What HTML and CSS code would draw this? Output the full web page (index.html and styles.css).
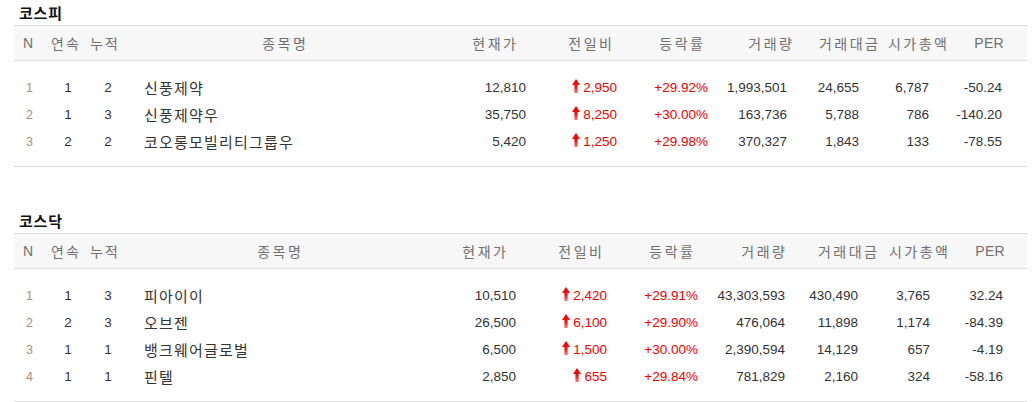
FILE: index.html
```html
<!DOCTYPE html>
<html lang="ko">
<head>
<meta charset="utf-8">
<title>상한가</title>
<link rel="stylesheet" href="styles.css">
</head>
<body>
<svg width="0" height="0" class="defs" aria-hidden="true">
  <defs>
    <linearGradient id="upg" x1="0" y1="0" x2="0" y2="1">
      <stop offset="0" stop-color="#f00000"/>
      <stop offset="0.55" stop-color="#f41010"/>
      <stop offset="1" stop-color="#ff7a7a"/>
    </linearGradient>
    <symbol id="up" viewBox="0 0 8 14">
      <polygon points="4,0 8,6 5.6,6 5.6,14 2.4,14 2.4,6 0,6" fill="url(#upg)"/>
    </symbol>
  </defs>
</svg>

<main class="page">
  <section class="market">
    <h2 class="market-title">코스피</h2>
    <div class="quote kospi">
      <div class="row head">
        <span class="c-n">N</span><span class="c-s">연속</span><span class="c-a">누적</span><span class="c-name">종목명</span><span class="c-price">현재가</span><span class="c-diff">전일비</span><span class="c-rate">등락률</span><span class="c-vol">거래량</span><span class="c-amt">거래대금</span><span class="c-cap">시가총액</span><span class="c-per">PER</span><span></span>
      </div>
      <div class="body">
        <div class="row">
          <span class="c-n">1</span><span class="c-s">1</span><span class="c-a">2</span><span class="c-name">신풍제약</span><span class="c-price">12,810</span><span class="c-diff"><svg class="up"><use href="#up"/></svg>2,950</span><span class="c-rate">+29.92%</span><span class="c-vol">1,993,501</span><span class="c-amt">24,655</span><span class="c-cap">6,787</span><span class="c-per">-50.24</span><span></span>
        </div>
        <div class="row">
          <span class="c-n">2</span><span class="c-s">1</span><span class="c-a">3</span><span class="c-name">신풍제약우</span><span class="c-price">35,750</span><span class="c-diff"><svg class="up"><use href="#up"/></svg>8,250</span><span class="c-rate">+30.00%</span><span class="c-vol">163,736</span><span class="c-amt">5,788</span><span class="c-cap">786</span><span class="c-per">-140.20</span><span></span>
        </div>
        <div class="row">
          <span class="c-n">3</span><span class="c-s">2</span><span class="c-a">2</span><span class="c-name">코오롱모빌리티그룹우</span><span class="c-price">5,420</span><span class="c-diff"><svg class="up"><use href="#up"/></svg>1,250</span><span class="c-rate">+29.98%</span><span class="c-vol">370,327</span><span class="c-amt">1,843</span><span class="c-cap">133</span><span class="c-per">-78.55</span><span></span>
        </div>
      </div>
    </div>
  </section>

  <section class="market">
    <h2 class="market-title">코스닥</h2>
    <div class="quote kosdaq">
      <div class="row head">
        <span class="c-n">N</span><span class="c-s">연속</span><span class="c-a">누적</span><span class="c-name">종목명</span><span class="c-price">현재가</span><span class="c-diff">전일비</span><span class="c-rate">등락률</span><span class="c-vol">거래량</span><span class="c-amt">거래대금</span><span class="c-cap">시가총액</span><span class="c-per">PER</span><span></span>
      </div>
      <div class="body">
        <div class="row">
          <span class="c-n">1</span><span class="c-s">1</span><span class="c-a">3</span><span class="c-name">피아이이</span><span class="c-price">10,510</span><span class="c-diff"><svg class="up"><use href="#up"/></svg>2,420</span><span class="c-rate">+29.91%</span><span class="c-vol">43,303,593</span><span class="c-amt">430,490</span><span class="c-cap">3,765</span><span class="c-per">32.24</span><span></span>
        </div>
        <div class="row">
          <span class="c-n">2</span><span class="c-s">2</span><span class="c-a">3</span><span class="c-name">오브젠</span><span class="c-price">26,500</span><span class="c-diff"><svg class="up"><use href="#up"/></svg>6,100</span><span class="c-rate">+29.90%</span><span class="c-vol">476,064</span><span class="c-amt">11,898</span><span class="c-cap">1,174</span><span class="c-per">-84.39</span><span></span>
        </div>
        <div class="row">
          <span class="c-n">3</span><span class="c-s">1</span><span class="c-a">1</span><span class="c-name">뱅크웨어글로벌</span><span class="c-price">6,500</span><span class="c-diff"><svg class="up"><use href="#up"/></svg>1,500</span><span class="c-rate">+30.00%</span><span class="c-vol">2,390,594</span><span class="c-amt">14,129</span><span class="c-cap">657</span><span class="c-per">-4.19</span><span></span>
        </div>
        <div class="row">
          <span class="c-n">4</span><span class="c-s">1</span><span class="c-a">1</span><span class="c-name">핀텔</span><span class="c-price">2,850</span><span class="c-diff"><svg class="up"><use href="#up"/></svg>655</span><span class="c-rate">+29.84%</span><span class="c-vol">781,829</span><span class="c-amt">2,160</span><span class="c-cap">324</span><span class="c-per">-58.16</span><span></span>
        </div>
      </div>
    </div>
  </section>
</main>
</body>
</html>
```

FILE: styles.css
```css
* { box-sizing: border-box; }

html, body {
  margin: 0;
  background: #fff;
}

body {
  font-family: "Liberation Sans", "Noto Sans CJK KR", Arial, sans-serif;
  color: #333;
}

.defs {
  position: absolute;
  width: 0;
  height: 0;
  overflow: hidden;
}

.page {
  padding: 0 5px 0 14px;
}

.market + .market {
  margin-top: 41px;
}

.market-title {
  margin: 0;
  padding-left: 5px;
  height: 25px;
  line-height: 25px;
  font-family: "Noto Sans CJK KR", sans-serif;
  font-size: 15px;
  font-weight: 700;
  letter-spacing: 0.8px;
  color: #111;
}

.row {
  display: grid;
  align-items: center;
  white-space: nowrap;
}

.kospi .row {
  grid-template-columns: 28px 46px 32px 328px 78px 91px 91px 84px 86px 69px 57px 1fr;
}

.kosdaq .row {
  grid-template-columns: 28px 46px 32px 318px 78px 91px 91px 87px 92px 71px 57px 1fr;
}

/* header */
.head {
  height: 36px;
  background: #f7f7f7;
  border-top: 1px solid #dcdcdc;
  border-bottom: 1px solid #dcdcdc;
  font-family: "Noto Sans CJK KR", sans-serif;
  font-size: 14px;
  font-weight: 400;
  letter-spacing: 2.5px;
  color: #707070;
  line-height: 20px;
}

.head span {
  text-align: right;
  margin-right: -2.5px;
}
.head .c-n,
.head .c-s,
.head .c-a,
.head .c-name {
  text-align: center;
  margin-right: 0;
  text-indent: 2.5px;
}
.head .c-s,
.head .c-a { letter-spacing: 2px; text-indent: 2px; }
.head .c-n { font-family: "Liberation Sans", sans-serif; font-size: 14px; letter-spacing: 0; text-indent: 0; }
.head .c-per {
  font-family: "Liberation Sans", sans-serif;
  font-size: 14px;
  letter-spacing: 0.3px;
  margin-right: 0;
}
.head .c-price { padding-right: 10px; }
.head .c-diff { padding-right: 5px; }
.head .c-rate { padding-right: 5px; }

/* body */
.body {
  padding: 13px 0 11px;
  border-bottom: 1px solid #dcdcdc;
}

.body .row {
  height: 27px;
  font-size: 13.5px;
  line-height: 20px;
}

.body span { text-align: right; }

.body .c-n {
  text-align: center;
  padding-left: 3px;
  color: #a09080;
  font-size: 12.5px;
}
.body .c-s {
  text-align: center;
  padding-left: 6px;
}
.body .c-a {
  text-align: center;
  padding-left: 8px;
}

.body .c-name {
  text-align: left;
  padding-left: 24px;
  font-family: "Noto Sans CJK KR", sans-serif;
  font-size: 15px;
  letter-spacing: 1.2px;
  color: #333;
}

.body .c-diff,
.body .c-rate {
  color: #f00000;
}

.body .c-diff {
  display: flex;
  justify-content: flex-end;
  align-items: center;
  gap: 3px;
}

.up {
  width: 8px;
  height: 14px;
  margin-top: -3px;
}

.body .c-vol { padding-right: 5px; }
.body .c-amt { padding-right: 19px; }
.body .c-cap { padding-right: 18px; }
.body .c-per { padding-right: 2px; }

.kosdaq .body .c-vol { padding-right: 0; }
```
